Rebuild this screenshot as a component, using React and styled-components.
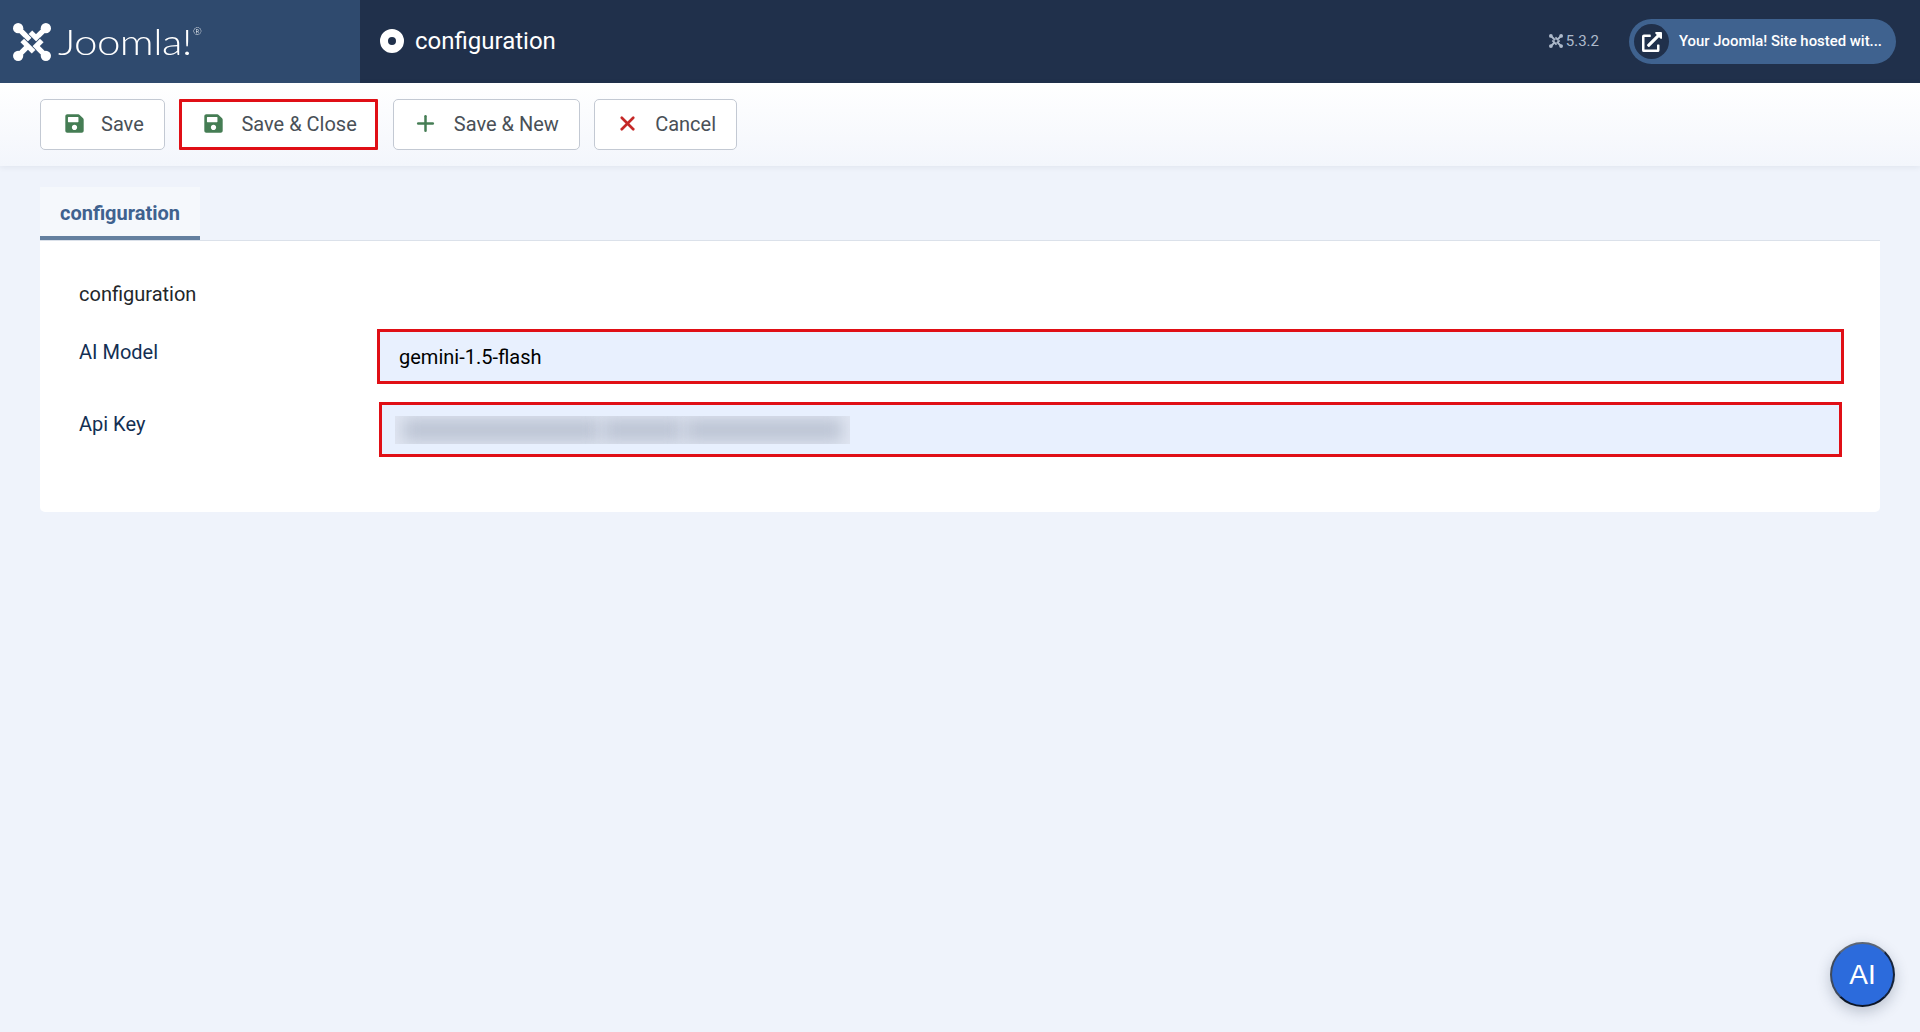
import React from 'react'
import styled, {createGlobalStyle} from 'styled-components'
import {FaSave, FaExternalLinkAlt} from 'react-icons/fa'
import {Plus, X} from 'lucide-react'

const GlobalStyle = createGlobalStyle`
  html, body, #root {
    height: 100%;
    margin: 0;
  }
  body {
    font-family: Roboto, 'Liberation Sans', sans-serif;
    background: #eff3fb;
    overflow: hidden;
  }
`

const Page = styled.div`
  position: relative;
  height: 100%;
`

const Header = styled.header`
  display: flex;
  align-items: center;
  height: 83px;
  background: #20304b;
  color: #fff;
`

const Brand = styled.div`
  display: flex;
  align-items: center;
  gap: 7px;
  width: 360px;
  height: 100%;
  padding-left: 13px;
  box-sizing: border-box;
  background: #2f4a6e;
`

const Wordmark = styled.span`
  display: flex;
  padding-bottom: 2px;
  font-family: Lato, sans-serif;
  font-weight: 300;
  font-size: 36px;
  letter-spacing: -0.5px;
  transform: scaleX(1.17);
  transform-origin: left center;
  & sup {
    font-size: 9px;
    margin: 7px 0 0 1px;
  }
`

const Title = styled.h1`
  display: flex;
  align-items: center;
  gap: 11px;
  margin: 0 0 0 20px;
  padding-bottom: 2px;
  font-size: 24px;
  font-weight: 400;
  flex: 1;
`

const TitleDot = styled.span`
  width: 8px;
  height: 8px;
  border: 8px solid #fff;
  border-radius: 50%;
  background: #20304b;
`

const Version = styled.span`
  display: flex;
  align-items: center;
  gap: 3px;
  margin-right: 30px;
  padding-bottom: 2px;
  font-size: 15px;
  color: #aebacb;
`

const SitePill = styled.a`
  display: flex;
  align-items: center;
  gap: 10px;
  width: 267px;
  height: 45px;
  margin-right: 24px;
  padding-left: 5px;
  box-sizing: border-box;
  border-radius: 23px;
  background: #3f628f;
  color: #fff;
  font-size: 14.9px;
  font-weight: 500;
  white-space: nowrap;
`

const PillIcon = styled.span`
  display: flex;
  align-items: center;
  justify-content: center;
  width: 35px;
  height: 35px;
  border-radius: 50%;
  background: #20304b;
  font-size: 20px;
`

const PillText = styled.span`
  padding-bottom: 2px;
`

const Toolbar = styled.div`
  display: flex;
  gap: 14.4px;
  height: 83px;
  padding: 16px 40px 0;
  box-sizing: border-box;
  background: linear-gradient(#fff, #f3f6fc);
  box-shadow: 0 1px 6px rgba(32, 48, 75, 0.08);
`

const ToolButton = styled.button`
  display: flex;
  align-items: center;
  gap: ${props => props.$gap}px;
  height: 51px;
  width: ${props => props.$width}px;
  padding: 0 0 2px ${props => props.$inset}px;
  box-sizing: border-box;
  background: #fff;
  border: ${props => props.$marked ? '3px solid #e00f16' : '1px solid #c3c9d3'};
  border-radius: ${props => props.$marked ? '1px' : '5px'};
  color: #495057;
  font-family: inherit;
  font-size: 20px;
`

const ButtonIcon = styled.span`
  display: flex;
  justify-content: center;
  width: 20px;
  font-size: 21px;
  color: ${props => props.$color};
  & svg {
    flex-shrink: 0;
  }
`

const Content = styled.main`
  padding: 21px 40px 0;
`

const Tabs = styled.div`
  display: flex;
  border-bottom: 1px solid #dbe1ea;
`

const Tab = styled.div`
  width: 160px;
  height: 53px;
  padding-top: 14px;
  box-sizing: border-box;
  text-align: center;
  background: #f5f8fc;
  border-bottom: 4px solid #64809f;
  color: #3f628f;
  font-size: 20px;
  font-weight: 700;
`

const Card = styled.section`
  height: 271px;
  padding: 41px 36px 0 39px;
  box-sizing: border-box;
  background: #fff;
  border-radius: 0 0 5px 5px;
`

const Legend = styled.div`
  font-size: 20px;
  line-height: 24px;
  color: #22262a;
  margin-bottom: 23px;
`

const Row = styled.div`
  display: grid;
  grid-template-columns: 298px 1fr;
  margin-bottom: 18px;
`

const Label = styled.label`
  padding-top: ${props => props.$top}px;
  font-size: 20px;
  line-height: 24px;
  color: #132f53;
`

const Field = styled.div`
  display: flex;
  align-items: center;
  height: 55px;
  margin: ${props => props.$narrow ? '0 2px 0 2px' : '0'};
  box-sizing: border-box;
  background: #e8f0fe;
  border: 3px solid #e00f16;
`

const FieldInput = styled.input`
  width: 100%;
  padding: 0 19px;
  box-sizing: border-box;
  background: transparent;
  border: 0;
  outline: 0;
  color: #000;
  font-family: inherit;
  font-size: 20px;
`

const MaskedValue = styled.div`
  display: flex;
  align-items: center;
  gap: 3px;
  width: 455px;
  height: 28px;
  margin-left: 13px;
  padding: 0 8px;
  box-sizing: border-box;
  overflow: hidden;
  background: #e0e6f2;
`

const MaskedChunk = styled.span`
  flex: ${props => props.$grow};
  height: 22px;
  background: #bbc3d3;
  filter: blur(8px);
`

const AiButton = styled.button`
  position: absolute;
  left: 1830px;
  top: 942px;
  width: 65px;
  height: 65px;
  padding: 0;
  border-radius: 50%;
  border: 2px solid;
  border-color: #5d6675 #16233a #0c1526 #3f4a5c;
  background: #2c6bdc;
  color: #fff;
  font-family: 'Liberation Sans', sans-serif;
  font-size: 28px;
  box-shadow: 0 5px 14px rgba(32, 48, 75, 0.25);
`

// one side of the centre diamond and one corner stem, rotated per corner.
// gap is the colour behind the mark, it cuts the weave where the sides cross
const JoomlaMark = ({size, gap}) => (
  <svg width={size} height={size} viewBox='0 0 37 37' fill='none'>
    {[0, 90, 180, 270].map(angle => (
      <g key={angle} transform={`rotate(${angle} 18.5 18.5)`}>
        <path d='M8.5 20.5 L20.5 8.5' stroke={gap} strokeWidth='6.4' />
        <path d='M9 20 L20 9' stroke='currentColor' strokeWidth='5' />
        <path d='M5 5 L14.5 14.5' stroke='currentColor' strokeWidth='5.2' />
        <circle cx='5' cy='5' r='5' fill='currentColor' />
      </g>
    ))}
  </svg>
)

export default function App() {
  return (
    <Page>
      <GlobalStyle />
      <Header>
        <Brand>
          <JoomlaMark size={38} gap='#2f4a6e' />
          <Wordmark>Joomla!<sup>®</sup></Wordmark>
        </Brand>
        <Title><TitleDot />configuration</Title>
        <Version><JoomlaMark size={14} gap='#20304b' />5.3.2</Version>
        <SitePill>
          <PillIcon><FaExternalLinkAlt /></PillIcon>
          <PillText>Your Joomla! Site hosted wit...</PillText>
        </SitePill>
      </Header>
      <Toolbar>
        <ToolButton $width={125} $inset={23} $gap={17}>
          <ButtonIcon $color='#457d54'><FaSave /></ButtonIcon>Save
        </ToolButton>
        <ToolButton $width={199} $inset={21} $gap={18} $marked>
          <ButtonIcon $color='#457d54'><FaSave /></ButtonIcon>Save &amp; Close
        </ToolButton>
        <ToolButton $width={187} $inset={22} $gap={18}>
          <ButtonIcon $color='#457d54'><Plus size={25} strokeWidth={2.4} /></ButtonIcon>Save &amp; New
        </ToolButton>
        <ToolButton $width={143} $inset={22} $gap={18}>
          <ButtonIcon $color='#c52827'><X size={23} strokeWidth={2.8} /></ButtonIcon>Cancel
        </ToolButton>
      </Toolbar>
      <Content>
        <Tabs><Tab>configuration</Tab></Tabs>
        <Card>
          <Legend>configuration</Legend>
          <Row>
            <Label $top={11}>AI Model</Label>
            <Field><FieldInput readOnly value='gemini-1.5-flash' /></Field>
          </Row>
          <Row>
            <Label $top={10}>Api Key</Label>
            <Field $narrow>
              <MaskedValue>
                <MaskedChunk $grow={5} />
                <MaskedChunk $grow={2} />
                <MaskedChunk $grow={4} />
              </MaskedValue>
            </Field>
          </Row>
        </Card>
      </Content>
      <AiButton>AI</AiButton>
    </Page>
  )
}
